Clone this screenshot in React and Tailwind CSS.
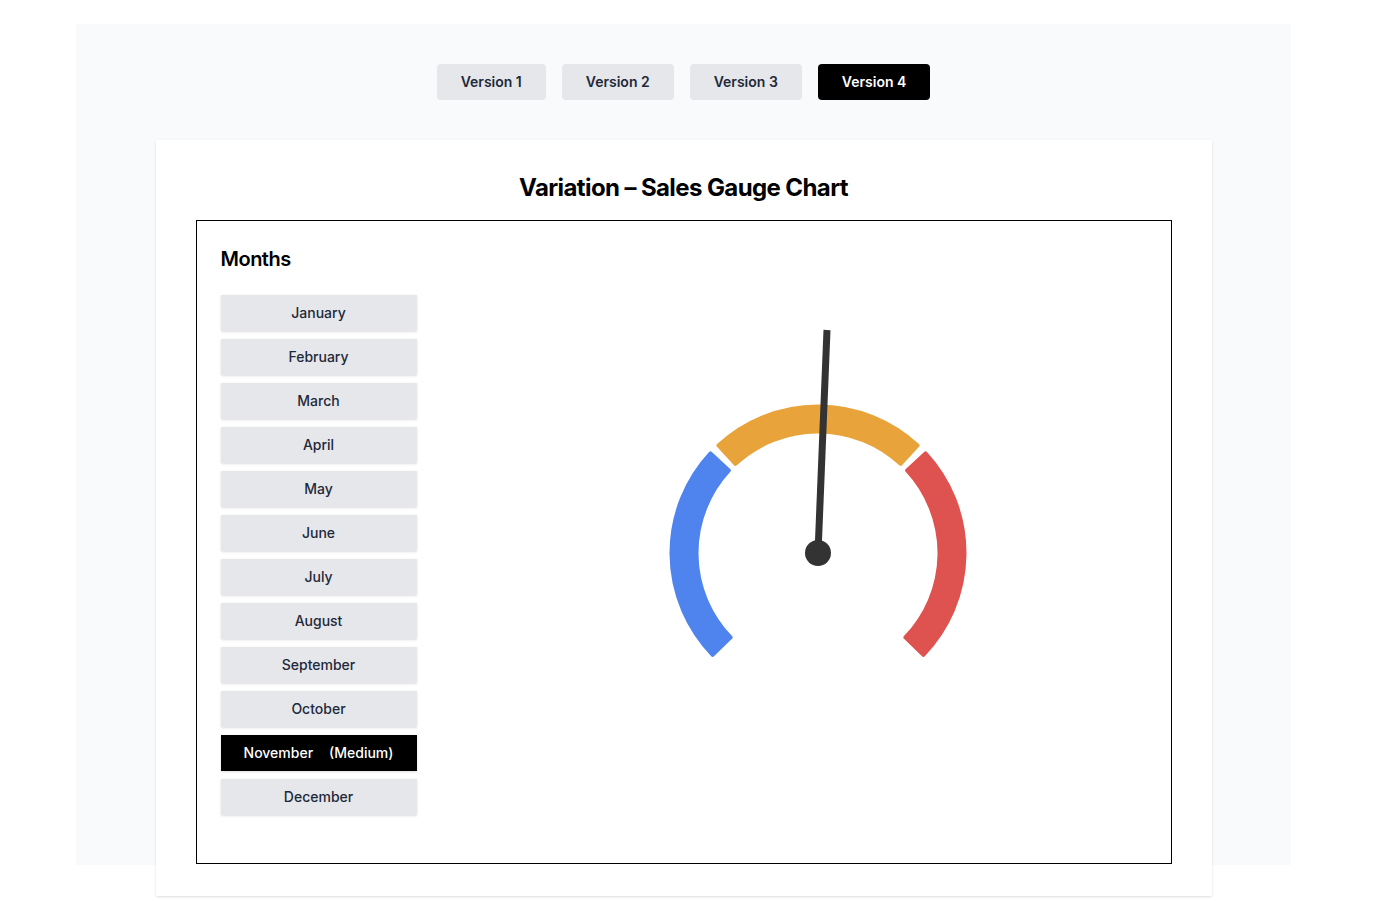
import React, { useState } from 'react';

const MONTHS = [
  'January', 'February', 'March', 'April', 'May', 'June',
  'July', 'August', 'September', 'October', 'November', 'December',
];

const CX = 200;
const CY = 240;

// annular sector, angles in degrees (0 = right, counter-clockwise positive)
function sector(a0, a1, r0, r1) {
  const p = (a, r) => {
    const t = (a * Math.PI) / 180;
    return `${(CX + r * Math.cos(t)).toFixed(2)} ${(CY - r * Math.sin(t)).toFixed(2)}`;
  };
  const large = Math.abs(a1 - a0) > 180 ? 1 : 0;
  return `M ${p(a1, r1)} A ${r1} ${r1} 0 ${large} 1 ${p(a0, r1)} L ${p(a0, r0)} A ${r0} ${r0} 0 ${large} 0 ${p(a1, r0)} Z`;
}

function Gauge() {
  const segs = [
    { a0: 137.2, a1: 224, color: '#4f83ee' },
    { a0: 47.2, a1: 132.8, color: '#e8a33a' },
    { a0: -44, a1: 42.8, color: '#de534f' },
  ];
  return (
    <svg width="400" height="400" viewBox="0 0 400 400" className="overflow-visible">
      {segs.map((s) => (
        <path
          key={s.color}
          d={sector(s.a0, s.a1, 121.5, 146.5)}
          fill={s.color}
          stroke={s.color}
          strokeWidth="4"
          strokeLinejoin="round"
        />
      ))}
      <line x1={CX} y1={CY} x2={209} y2={17} stroke="#333333" strokeWidth="7" />
      <circle cx={CX} cy={CY} r="13" fill="#333333" />
    </svg>
  );
}

export default function App() {
  const [version, setVersion] = useState(4);
  const [month, setMonth] = useState('November');

  return (
    <div className="min-h-screen bg-white pt-6" style={{ fontFamily: 'Inter, "Noto Sans", sans-serif' }}>
      <div className="ml-[76px] h-[841px] w-[1215px] bg-gray-50 pt-10">
        {/* version switcher */}
        <div className="flex justify-center gap-4">
          {[1, 2, 3, 4].map((v) => (
            <button
              key={v}
              onClick={() => setVersion(v)}
              className={`h-9 rounded px-6 text-sm font-semibold ${
                version === v ? 'bg-black text-white' : 'bg-gray-200 text-gray-800'
              }`}
            >
              Version {v}
            </button>
          ))}
        </div>

        {/* chart card */}
        <div className="mx-auto mt-10 w-[1056px] bg-white px-10 pb-8 pt-8 shadow-sm">
          <h1 className="mb-4 text-center text-2xl font-bold tracking-tight text-black">
            Variation – Sales Gauge Chart
          </h1>

          <div className="flex border border-black p-6 pb-12">
            <div className="w-[196px] shrink-0">
              <h2 className="mb-[22px] text-xl font-semibold tracking-tight text-black">Months</h2>
              <div className="flex flex-col gap-2">
                {MONTHS.map((m) => (
                  <button
                    key={m}
                    onClick={() => setMonth(m)}
                    className={`h-9 w-full text-sm font-medium shadow-sm ${
                      month === m ? 'bg-black text-white' : 'bg-gray-200 text-gray-800'
                    }`}
                  >
                    {m}
                    {month === m && <span className="ml-4">(Medium)</span>}
                  </button>
                ))}
              </div>
            </div>

            <div className="flex flex-1 items-start justify-center pl-[73px]">
              <div className="mt-[68px]">
                <Gauge />
              </div>
            </div>
          </div>
        </div>
      </div>
    </div>
  );
}
